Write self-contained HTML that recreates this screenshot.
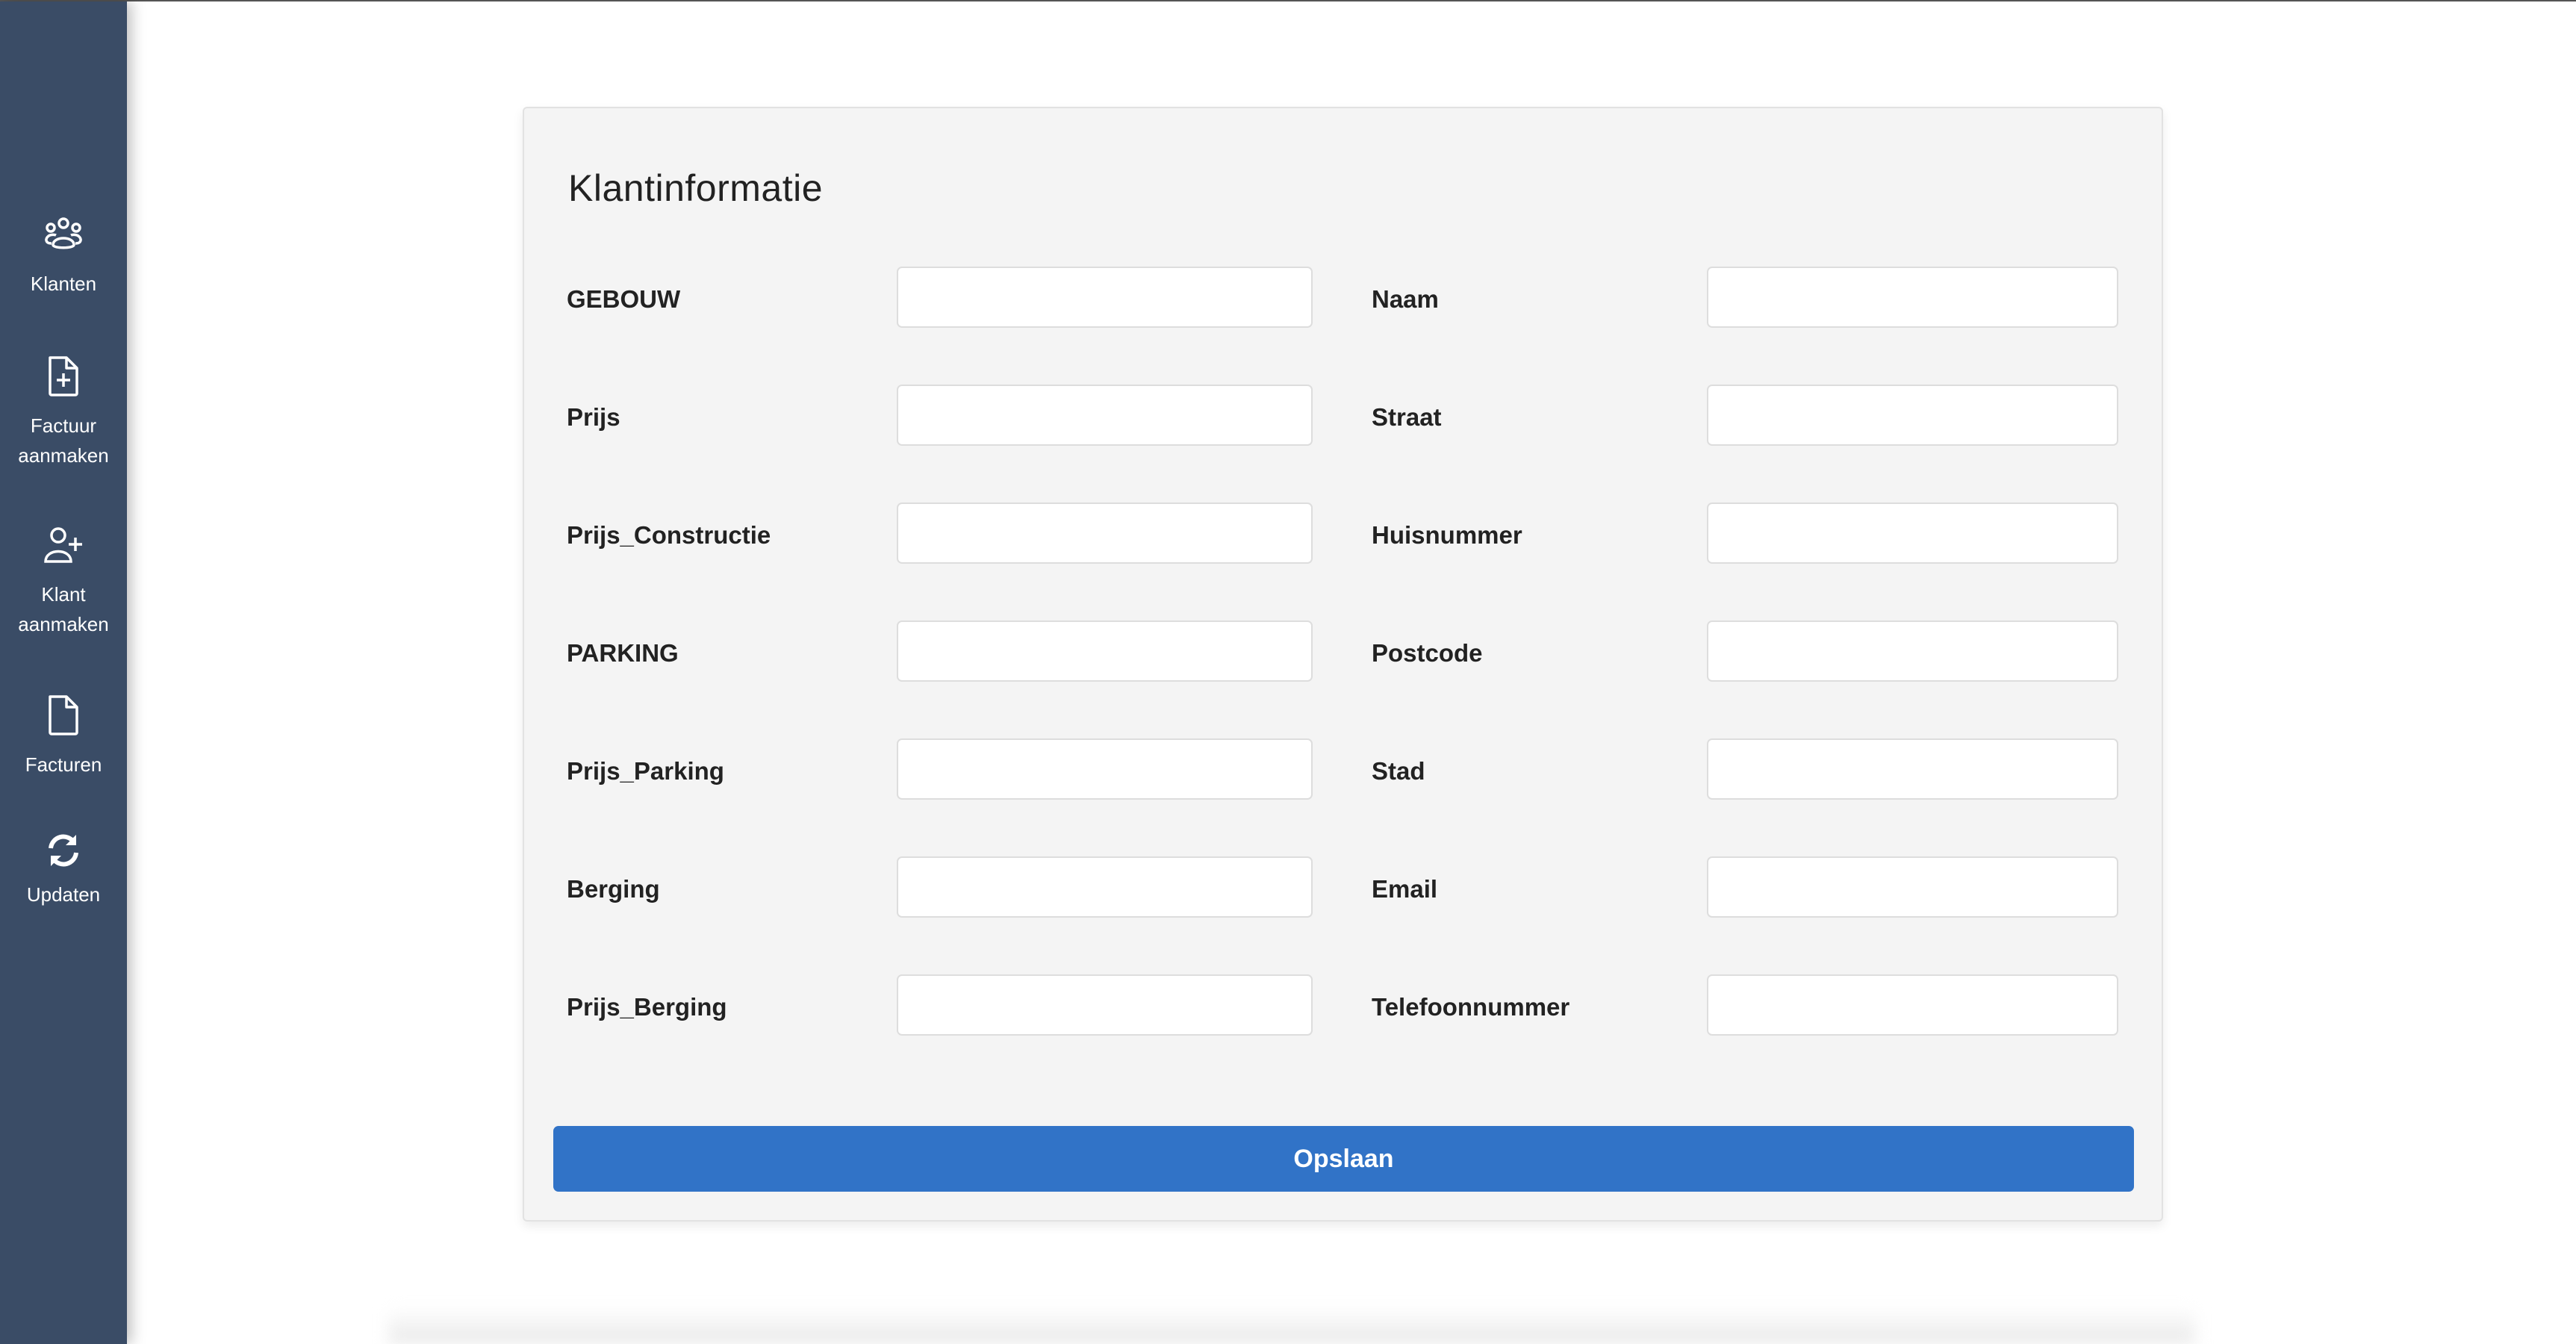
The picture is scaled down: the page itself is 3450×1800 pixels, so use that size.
<!DOCTYPE html>
<html style="width:3450px;height:1800px;overflow:hidden"><head><meta charset="utf-8"><style>
*{box-sizing:border-box;margin:0;padding:0}
body{width:3450px;height:1800px;background:#fff;position:relative;overflow:hidden;font-family:"Liberation Sans",sans-serif}
.topline{position:absolute;left:0;top:0;width:3450px;height:2px;background:#555}
.side{position:absolute;left:0;top:2px;width:170px;height:1798px;background:#3a4c66;box-shadow:6px 0 18px rgba(0,0,0,.25);color:#fff;text-align:center;font-size:26px;line-height:40px}
.item{position:absolute;left:0;width:170px}
.item svg{display:block;margin:0 auto}
.card{position:absolute;left:700px;top:143px;width:2197px;height:1493px;background:#f4f4f4;border:2px solid #e2e2e2;border-radius:6px;box-shadow:0 6px 14px rgba(0,0,0,.08)}
h1{position:absolute;left:59px;top:78px;font-size:50px;font-weight:normal;color:#222;letter-spacing:.5px}
.lbl{position:absolute;font-size:33px;font-weight:bold;color:#222;line-height:40px;margin-top:3px}
.inp{position:absolute;height:82px;background:#fff;border:2px solid #ddd;border-radius:7px;margin-top:2px}
.btn{position:absolute;left:39px;top:1363px;width:2117px;height:88px;background:#3173c7;border-radius:7px;color:#fff;font-weight:bold;font-size:34px;text-align:center;line-height:88px}
.shadow{position:absolute;left:520px;top:1750px;width:2420px;height:50px;background:linear-gradient(#fff,#e8e8e8);filter:blur(10px)}
</style></head><body>
<div class="topline"></div>
<div class="shadow"></div>
<div class="side">
 <div class="item" style="top:288px">
  <svg width="56" height="48" viewBox="0 0 56 48" fill="none" stroke="#fff" stroke-width="3.5"><circle cx="28" cy="9" r="6"/><circle cx="11" cy="15" r="5"/><circle cx="45" cy="15" r="5"/><path d="M14 38c0-12 28-12 28 0c0 5-28 5-28 0z"/><path d="M12 36c-8 0-9-6-4-10c3-2 8-2 10-1"/><path d="M44 36c8 0 9-6 4-10c-3-2-8-2-10-1"/></svg>
  <div style="margin-top:22px">Klanten</div>
 </div>
 <div class="item" style="top:474px">
  <svg width="44" height="56" viewBox="0 0 44 56" fill="none" stroke="#fff" stroke-width="3.5" stroke-linejoin="round"><path d="M4 3h22l14 14v34a2 2 0 0 1-2 2H6a2 2 0 0 1-2-2z"/><path d="M26 3v14h14"/><path d="M22 24v18M13 33h18"/></svg>
  <div style="margin-top:18px;line-height:40px">Factuur<br>aanmaken</div>
 </div>
 <div class="item" style="top:702px">
  <svg width="56" height="52" viewBox="0 0 56 52" fill="none" stroke="#fff" stroke-width="3.5"><circle cx="21" cy="13" r="9"/><path d="M4 48c0-18 34-18 34 0z"/><path d="M44 16v18M35 25h18"/></svg>
  <div style="margin-top:20px;line-height:40px">Klant<br>aanmaken</div>
 </div>
 <div class="item" style="top:928px">
  <svg width="44" height="56" viewBox="0 0 44 56" fill="none" stroke="#fff" stroke-width="3.5" stroke-linejoin="round"><path d="M4 3h22l14 14v34a2 2 0 0 1-2 2H6a2 2 0 0 1-2-2z"/><path d="M26 3v14h14"/></svg>
  <div style="margin-top:18px">Facturen</div>
 </div>
 <div class="item" style="top:1114px">
  <svg width="46" height="46" viewBox="0 0 46 46" fill="none" stroke="#fff" stroke-width="6"><path d="M6 20a17 17 0 0 1 31-8"/><path d="M40 26a17 17 0 0 1-31 8"/><path d="M40 2v14H26z" fill="#fff" stroke="none"/><path d="M6 44V30h14z" fill="#fff" stroke="none"/></svg>
  <div style="margin-top:16px">Updaten</div>
 </div>
</div>
<div class="card">
 <h1>Klantinformatie</h1>
 <div class="lbl" style="left:57px;top:233px">GEBOUW</div>
 <div class="lbl" style="left:57px;top:391px">Prijs</div>
 <div class="lbl" style="left:57px;top:549px">Prijs_Constructie</div>
 <div class="lbl" style="left:57px;top:707px">PARKING</div>
 <div class="lbl" style="left:57px;top:865px">Prijs_Parking</div>
 <div class="lbl" style="left:57px;top:1023px">Berging</div>
 <div class="lbl" style="left:57px;top:1181px">Prijs_Berging</div>
 <div class="lbl" style="left:1135px;top:233px">Naam</div>
 <div class="lbl" style="left:1135px;top:391px">Straat</div>
 <div class="lbl" style="left:1135px;top:549px">Huisnummer</div>
 <div class="lbl" style="left:1135px;top:707px">Postcode</div>
 <div class="lbl" style="left:1135px;top:865px">Stad</div>
 <div class="lbl" style="left:1135px;top:1023px">Email</div>
 <div class="lbl" style="left:1135px;top:1181px">Telefoonnummer</div>
 <div class="inp" style="left:499px;top:210px;width:557px"></div>
 <div class="inp" style="left:499px;top:368px;width:557px"></div>
 <div class="inp" style="left:499px;top:526px;width:557px"></div>
 <div class="inp" style="left:499px;top:684px;width:557px"></div>
 <div class="inp" style="left:499px;top:842px;width:557px"></div>
 <div class="inp" style="left:499px;top:1000px;width:557px"></div>
 <div class="inp" style="left:499px;top:1158px;width:557px"></div>
 <div class="inp" style="left:1584px;top:210px;width:551px"></div>
 <div class="inp" style="left:1584px;top:368px;width:551px"></div>
 <div class="inp" style="left:1584px;top:526px;width:551px"></div>
 <div class="inp" style="left:1584px;top:684px;width:551px"></div>
 <div class="inp" style="left:1584px;top:842px;width:551px"></div>
 <div class="inp" style="left:1584px;top:1000px;width:551px"></div>
 <div class="inp" style="left:1584px;top:1158px;width:551px"></div>
 <div class="btn">Opslaan</div>
</div>
</body></html>
